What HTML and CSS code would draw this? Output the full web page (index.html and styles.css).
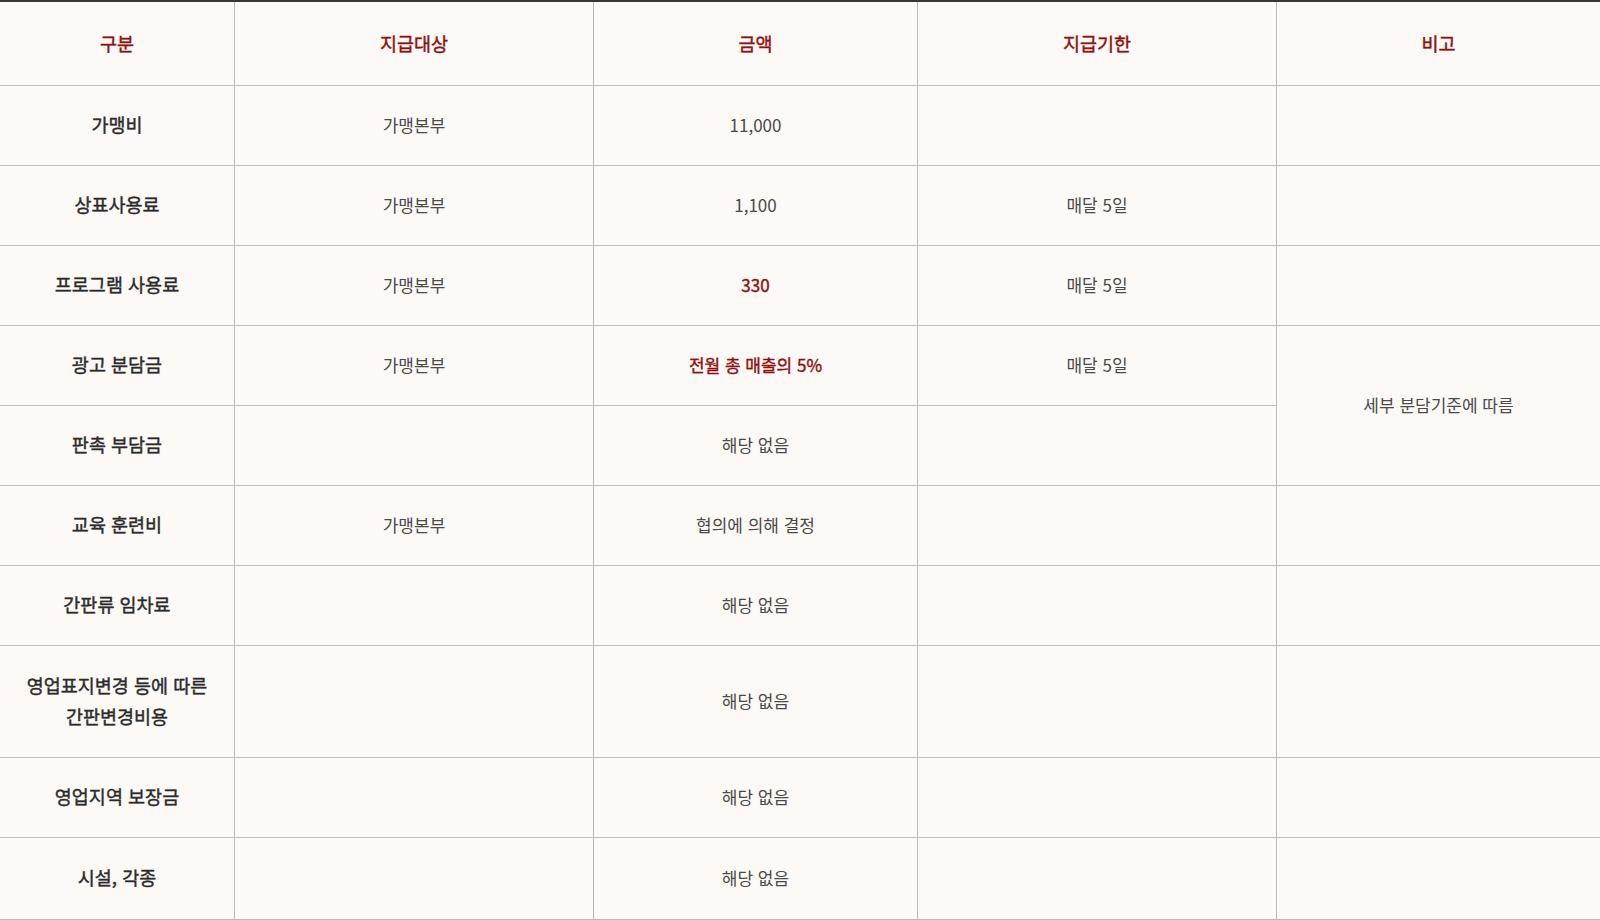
FILE: index.html
```html
<!DOCTYPE html>
<html lang="ko">
<head>
<meta charset="utf-8">
<title>가맹금 지급 안내</title>
<link rel="stylesheet" href="styles.css">
</head>
<body>
<table class="fee-table">
  <colgroup>
    <col class="c1"><col class="c2"><col class="c3"><col class="c4"><col class="c5">
  </colgroup>
  <thead>
    <tr><th>구분</th><th>지급대상</th><th>금액</th><th>지급기한</th><th>비고</th></tr>
  </thead>
  <tbody>
    <tr><td class="name">가맹비</td><td>가맹본부</td><td>11,000</td><td></td><td></td></tr>
    <tr><td class="name">상표사용료</td><td>가맹본부</td><td>1,100</td><td>매달 5일</td><td></td></tr>
    <tr><td class="name">프로그램 사용료</td><td>가맹본부</td><td class="accent">330</td><td>매달 5일</td><td></td></tr>
    <tr><td class="name">광고 분담금</td><td>가맹본부</td><td class="accent">전월 총 매출의 5%</td><td>매달 5일</td><td rowspan="2">세부 분담기준에 따름</td></tr>
    <tr><td class="name">판촉 부담금</td><td></td><td>해당 없음</td><td></td></tr>
    <tr><td class="name">교육 훈련비</td><td>가맹본부</td><td>협의에 의해 결정</td><td></td><td></td></tr>
    <tr><td class="name">간판류 임차료</td><td></td><td>해당 없음</td><td></td><td></td></tr>
    <tr class="tall"><td class="name">영업표지변경 등에 따른<br>간판변경비용</td><td></td><td>해당 없음</td><td></td><td></td></tr>
    <tr><td class="name">영업지역 보장금</td><td></td><td>해당 없음</td><td></td><td></td></tr>
    <tr class="last"><td class="name">시설, 각종</td><td></td><td>해당 없음</td><td></td><td></td></tr>
  </tbody>
</table>
</body>
</html>
```
FILE: styles.css
```css
html, body {
  margin: 0;
  padding: 0;
  background: #fcf9f6;
}
body {
  font-family: "Noto Sans CJK KR", "Noto Sans", sans-serif;
  color: #444;
}
.fee-table {
  width: 1600px;
  table-layout: fixed;
  border-collapse: separate;
  border-spacing: 0;
  border-top: 2px solid #383838;
  background: #fcf9f6;
}
.c1 { width: 234px; }
.c2 { width: 359px; }
.c3 { width: 324px; }
.c4 { width: 359px; }
.c5 { width: 324px; }

.fee-table th,
.fee-table td {
  padding: 0 0 3px;
  text-align: center;
  vertical-align: middle;
  border-bottom: 1px solid #bcbcbc;
  border-left: 1px solid #bcbcbc;
}
.fee-table th:first-child,
.fee-table td.name {
  border-left: 0;
}
.fee-table th {
  height: 81px;
  padding-bottom: 2px;
  font-size: 18.5px;
  font-weight: 400;
  color: #8e1010;
  -webkit-text-stroke: 0.4px currentColor;
}
.fee-table td {
  height: 76px;
  font-size: 17px;
  font-weight: 400;
  color: #4a4a4a;
}
.fee-table td.name {
  height: 78px;
  padding-bottom: 1px;
  font-size: 18.5px;
  font-weight: 400;
  color: #2b2b2b;
  line-height: 31.5px;
  -webkit-text-stroke: 0.4px currentColor;
}
.fee-table tr.tall td {
  height: 108px;
}
.fee-table tr.tall td.name {
  height: 110px;
}
.fee-table tr.last td {
  height: 78px;
}
.fee-table tr.last td.name {
  height: 80px;
}
.fee-table td.accent {
  color: #8e1010;
  -webkit-text-stroke: 0.4px currentColor;
}
```
